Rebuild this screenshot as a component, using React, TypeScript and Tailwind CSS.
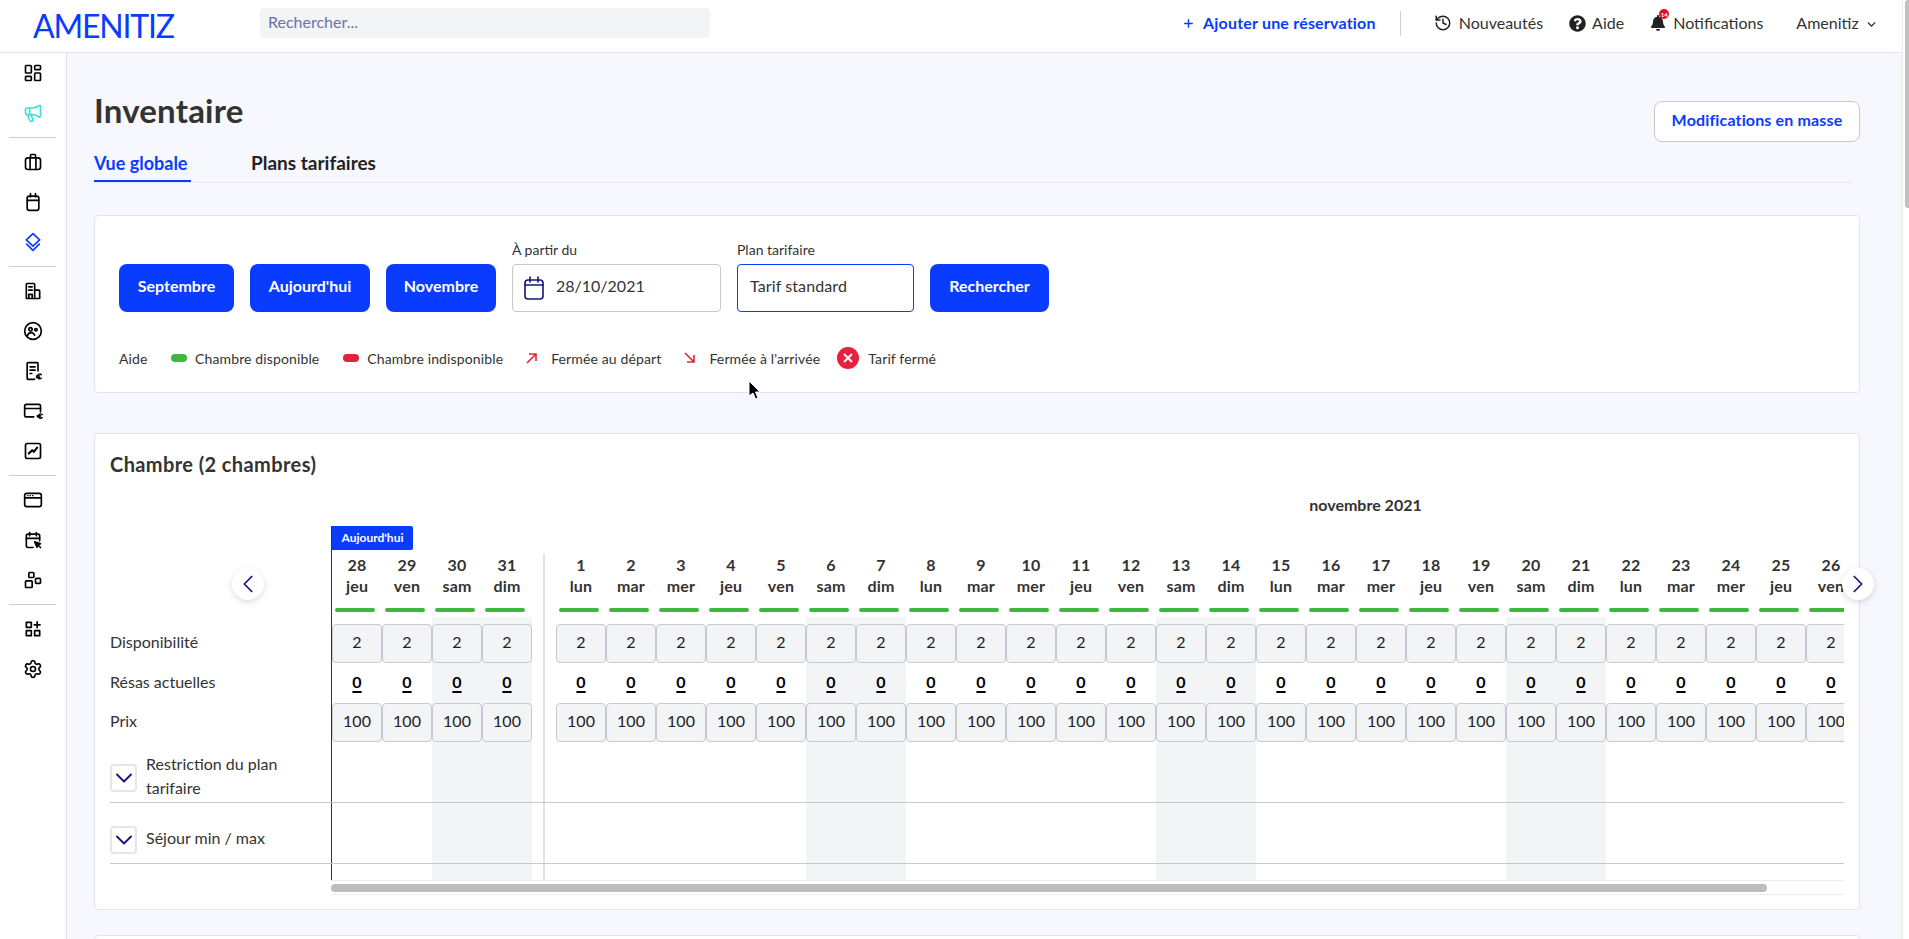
import { Fragment } from "react";
import {
  ChevronDown,
  ChevronLeft,
  ChevronRight,
  History,
  LayoutDashboard,
  Megaphone,
  Plus,
  Settings,
} from "lucide-react";
import { FaBell, FaQuestionCircle } from "react-icons/fa";

type Day = { num: number; name: string };

const OCTOBER: Day[] = [
  { num: 28, name: "jeu" },
  { num: 29, name: "ven" },
  { num: 30, name: "sam" },
  { num: 31, name: "dim" },
];

const WEEK = ["lun", "mar", "mer", "jeu", "ven", "sam", "dim"];
const NOVEMBER: Day[] = Array.from({ length: 26 }, (_, i) => ({ num: i + 1, name: WEEK[i % 7] }));

const isWeekend = (d: Day) => d.name === "sam" || d.name === "dim";

function Glyph({ children, className = "text-black" }: { children: React.ReactNode; className?: string }) {
  return (
    <svg
      width="20"
      height="20"
      viewBox="0 0 24 24"
      fill="none"
      stroke="currentColor"
      strokeWidth="2"
      strokeLinecap="round"
      strokeLinejoin="round"
      className={className}
    >
      {children}
    </svg>
  );
}

function Luggage() {
  return (
    <Glyph>
      <rect x="3" y="7" width="18" height="14" rx="3" />
      <path d="M9 7V4a1 1 0 0 1 1-1h4a1 1 0 0 1 1 1v3M8.500 7v14M15.500 7v14" />
    </Glyph>
  );
}

function CalendarBox() {
  return (
    <Glyph>
      <rect x="5" y="5" width="14" height="17" rx="2.500" />
      <path d="M5 10h14M9 2v4M15 2v4" />
    </Glyph>
  );
}

function StackedLayers() {
  return (
    <Glyph className="text-[#0a3cff]">
      <path d="M12 2l8 7.500-8 7.500-8-7.500z" />
      <path d="M4.500 14.500L12 22l7.500-7.500" />
    </Glyph>
  );
}

function Building() {
  return (
    <Glyph>
      <path d="M4 21V4a1 1 0 0 1 1-1h8a1 1 0 0 1 1 1v17z" />
      <path d="M14 11h5a1 1 0 0 1 1 1v9h-6" />
      <path d="M7 7h4M7 11h4M7 21v-5h4v5" />
    </Glyph>
  );
}

function Face() {
  return (
    <Glyph>
      <circle cx="12" cy="12" r="10" />
      <circle cx="9" cy="10" r="2" />
      <circle cx="15.500" cy="10.500" r="1.500" />
      <path d="M5 18c1-3 3-4 5-4s3 1 4 3" />
    </Glyph>
  );
}

function InvoiceEuro() {
  return (
    <Glyph>
      <path d="M14 22H6a1 1 0 0 1-1-1V3a1 1 0 0 1 1-1h11a1 1 0 0 1 1 1v9" />
      <path d="M8.500 7h6M8.500 11h6M8.500 15h2" />
      <path d="M22 16.500a2.500 2.500 0 0 0-4.500 1.500v1a2.500 2.500 0 0 0 4.500 1.500M16 18h4M16 20h4" strokeWidth="1.600" />
    </Glyph>
  );
}

function CardEuro() {
  return (
    <Glyph>
      <path d="M13 19H4a2 2 0 0 1-2-2V6a2 2 0 0 1 2-2h15a2 2 0 0 1 2 2v7" />
      <path d="M2 9h19" />
      <path d="M23 16.500a2.300 2.300 0 0 0-4.200 1.300v.7a2.300 2.300 0 0 0 4.200 1.300M17 17.500h4M17 19h4" strokeWidth="1.600" />
    </Glyph>
  );
}

function ChartBox() {
  return (
    <Glyph>
      <rect x="3" y="3" width="18" height="18" rx="2" />
      <path d="M7 15l4-4 2 2 4-5" strokeWidth="2.600" />
    </Glyph>
  );
}

function BrowserWindow() {
  return (
    <Glyph>
      <rect x="2" y="4" width="20" height="16" rx="2.500" />
      <path d="M2 9.500h20" />
      <path d="M5.500 6.800h.5M8.500 6.800h.5M11.500 6.800h.5" strokeWidth="1.600" />
    </Glyph>
  );
}

function CalendarPointer() {
  return (
    <Glyph>
      <path d="M12 21H6a2 2 0 0 1-2-2V7a2 2 0 0 1 2-2h12a2 2 0 0 1 2 2v6" />
      <path d="M4 10h16M8 3v4M16 3v4" />
      <path d="M14 14l7 2.500-3 1.200-1.200 3z" fill="currentColor" />
      <path d="M18 18l3 3" />
    </Glyph>
  );
}

function Blocks() {
  return (
    <Glyph>
      <rect x="7" y="3" width="6" height="6" rx="1" />
      <rect x="3" y="13" width="8" height="8" rx="1" />
      <rect x="15" y="10" width="6" height="6" rx="1" />
    </Glyph>
  );
}

function GridPlus() {
  return (
    <Glyph>
      <rect x="4" y="4" width="6" height="6" />
      <rect x="4" y="14" width="6" height="6" />
      <rect x="14" y="14" width="6" height="6" />
      <path d="M17 3.500v7M13.500 7h7" />
    </Glyph>
  );
}

function SideIcon({ children }: { children: React.ReactNode }) {
  return <div className="flex h-[40px] items-center justify-center">{children}</div>;
}

function SideDivider() {
  return <div className="mx-[9px] my-[4px] h-[1px] bg-[#cfcfcf]" />;
}

function Sidebar() {
  return (
    <aside className="w-[67px] shrink-0 border-r border-[#dfe3f8] bg-white pr-[1px]">
      <SideIcon>
        <LayoutDashboard size={20} strokeWidth={2} className="text-black" />
      </SideIcon>
      <SideIcon>
        <Megaphone size={20} strokeWidth={2} className="text-[#3fe0d8]" />
      </SideIcon>
      <SideDivider />
      <SideIcon>
        <Luggage />
      </SideIcon>
      <SideIcon>
        <CalendarBox />
      </SideIcon>
      <SideIcon>
        <StackedLayers />
      </SideIcon>
      <SideDivider />
      <SideIcon>
        <Building />
      </SideIcon>
      <SideIcon>
        <Face />
      </SideIcon>
      <SideIcon>
        <InvoiceEuro />
      </SideIcon>
      <SideIcon>
        <CardEuro />
      </SideIcon>
      <SideIcon>
        <ChartBox />
      </SideIcon>
      <SideDivider />
      <SideIcon>
        <BrowserWindow />
      </SideIcon>
      <SideIcon>
        <CalendarPointer />
      </SideIcon>
      <SideIcon>
        <Blocks />
      </SideIcon>
      <SideDivider />
      <SideIcon>
        <GridPlus />
      </SideIcon>
      <SideIcon>
        <Settings size={20} strokeWidth={2} className="text-black" />
      </SideIcon>
    </aside>
  );
}

function Header() {
  return (
    <header className="flex h-[53px] shrink-0 items-center border-b border-[#dfe3f8] bg-white pb-[6px]">
      <div className="ml-[33px] mt-[5px] w-[227px] text-[32px] font-normal leading-none tracking-[-1.2px] text-[#0a3cff]">AMENITIZ</div>
      <div className="flex h-[30px] w-[450px] items-center rounded-[4px] bg-[#f3f4f6] pb-[2px] pl-[8px] text-[16px] text-[#6f6fae]">
        Rechercher...
      </div>
      <div className="ml-[472px] flex items-center text-[#0a3cff]">
        <Plus size={13} strokeWidth={2.5} />
        <span className="ml-[8px] text-[16px] font-bold tracking-[0.2px]">Ajouter une réservation</span>
      </div>
      <div className="ml-[24px] h-[25px] w-[1px] bg-[#cfcfcf]" />
      <div className="ml-[33px] flex items-center text-[16px] text-[#333]">
        <History size={18} strokeWidth={2} className="text-[#222]" />
        <span className="ml-[7px]">Nouveautés</span>
        <FaQuestionCircle size={17} className="ml-[26px] text-[#222]" />
        <span className="ml-[6px]">Aide</span>
        <div className="relative ml-[26px] flex">
          <FaBell size={16} className="text-[#222]" />
          <span className="absolute left-[9px] top-[-6px] flex h-[10px] w-[10px] items-center justify-center rounded-full bg-[#e01020] text-[6px] font-bold text-white">
            14
          </span>
        </div>
        <span className="ml-[7px]">Notifications</span>
        <span className="ml-[33px]">Amenitiz</span>
        <ChevronDown size={13} strokeWidth={2.5} className="ml-[6px] mt-[2px] text-[#222]" />
      </div>
    </header>
  );
}

function Pill({ color, label }: { color: string; label: string }) {
  return (
    <div className="flex items-center gap-[8px]">
      <span className={`h-[8px] w-[16px] rounded-full ${color}`} />
      <span>{label}</span>
    </div>
  );
}

function Arrow({ down }: { down?: boolean }) {
  return (
    <svg width="14" height="14" viewBox="0 0 14 14" fill="none" stroke="#e8203f" strokeWidth="1.6">
      {down ? <path d="M2 2l9 9M11 4v7H4" /> : <path d="M2 12l9-9M4 3h7v7" />}
    </svg>
  );
}

function Filters() {
  const btn = "flex h-[48px] items-center justify-center rounded-[8px] bg-[#0a3cff] pb-[4px] text-[16px] font-bold text-white";
  return (
    <section className="h-[178px] rounded-[4px] border border-[#dfe3f5] bg-white pl-[24px] pt-[26px]">
      <div className="flex items-end gap-[16px]">
        <div className={`${btn} w-[115px]`}>Septembre</div>
        <div className={`${btn} w-[120px]`}>Aujourd'hui</div>
        <div className={`${btn} w-[110px]`}>Novembre</div>
        <div>
          <div className="mb-[6px] text-[14px] leading-[16px] text-[#333]">À partir du</div>
          <div className="flex h-[48px] w-[209px] items-center rounded-[4px] border border-[#c8c8c8] pl-[11px] text-[16px] text-[#333]">
            <svg width="20" height="24" viewBox="0 0 20 24" fill="none" stroke="#14147a" strokeWidth="1.6" strokeLinecap="round">
              <rect x="1" y="4" width="18" height="19" rx="3" />
              <path d="M1 9h18M6 1v5M14 1v5" />
            </svg>
            <span className="mb-[4px] ml-[12px]">28/10/2021</span>
          </div>
        </div>
        <div>
          <div className="mb-[6px] text-[14px] leading-[16px] text-[#333]">Plan tarifaire</div>
          <div className="flex h-[48px] w-[177px] items-center rounded-[4px] border border-[#0a3cff] pb-[4px] pl-[12px] text-[16px] tracking-[0.1px] text-[#333]">
            Tarif standard
          </div>
        </div>
        <div className={`${btn} w-[119px]`}>Rechercher</div>
      </div>
      <div className="mt-[35px] flex h-[22px] items-center text-[14px] tracking-[0.13px] text-[#333]">
        <span className="w-[52px]">Aide</span>
        <Pill color="bg-[#3cb93c]" label="Chambre disponible" />
        <div className="ml-[24px]">
          <Pill color="bg-[#e8203f]" label="Chambre indisponible" />
        </div>
        <div className="ml-[22px] flex items-center gap-[12px]">
          <Arrow />
          <span>Fermée au départ</span>
        </div>
        <div className="ml-[22px] flex items-center gap-[12px]">
          <Arrow down />
          <span>Fermée à l'arrivée</span>
        </div>
        <div className="ml-[17px] flex items-center gap-[9px]">
          <span className="flex h-[22px] w-[22px] items-center justify-center rounded-full bg-[#e8203f]">
            <svg width="10" height="10" viewBox="0 0 10 10" stroke="white" strokeWidth="2">
              <path d="M1 1l8 8M9 1l-8 8" />
            </svg>
          </span>
          <span>Tarif fermé</span>
        </div>
      </div>
    </section>
  );
}

// one row of the calendar: the label on the left, then a cell per day with the month gap in between
function Row({
  label,
  className,
  render,
  line = true,
  shade = true,
}: {
  label?: React.ReactNode;
  className: string;
  render: (d: Day) => React.ReactNode;
  line?: boolean;
  shade?: boolean;
}) {
  const cell = (d: Day) => (
    <div key={d.num} className={`flex w-[50px] shrink-0 justify-center ${shade && isWeekend(d) ? "bg-[#f3f4f6]" : ""}`}>
      {render(d)}
    </div>
  );
  return (
    <div className={`flex ${className}`}>
      <div className="flex w-[221px] shrink-0 items-center">{label}</div>
      <div className="flex min-w-0 flex-1 overflow-hidden border-l border-[#0a20ff]">
        {OCTOBER.map(cell)}
        <div className="flex w-[24px] shrink-0 justify-center">
          {line && <div className="h-full w-[2px] bg-[#e2e2e6]" />}
        </div>
        {NOVEMBER.map(cell)}
      </div>
    </div>
  );
}

function BoxCell({ value }: { value: number }) {
  return (
    <div className="flex h-[39px] w-[50px] items-center justify-center rounded-[4px] border border-[#c8c8d0] bg-[#f3f4f6] pb-[3px] text-[16px] text-[#222]">
      {value}
    </div>
  );
}

function Expander({ label }: { label: React.ReactNode }) {
  return (
    <div className="flex items-center gap-[9px]">
      <div className="flex h-[28px] w-[27px] shrink-0 items-center justify-center rounded-[4px] border-2 border-[#e6e6ea]">
        <ChevronDown size={28} strokeWidth={1.6} className="shrink-0 text-[#14147a]" />
      </div>
      <div className="pb-[5px] text-[16px] leading-[24px] text-[#333]">{label}</div>
    </div>
  );
}

function RoomCard() {
  const rowLabel = "pb-[3px] text-[16px] text-[#333]";
  return (
    <section className="relative mt-[40px] h-[477px] rounded-[4px] border border-[#dfe3f5] bg-white pl-[15px] pr-[15px]">
      <h2 className="pt-[20px] text-[20px] font-bold leading-[21px] tracking-[0.4px] text-[#333]">Chambre (2 chambres)</h2>
      <div className="pl-[777px] pt-[20px] text-center text-[16px] font-bold leading-[20px] text-[#333]">novembre 2021</div>

      <div className="mt-[11px] flex h-[28px]">
        <div className="w-[221px] shrink-0" />
        <div className="h-full flex-1 border-l border-[#0a20ff]">
          <div className="flex h-[24px] w-[81px] items-center justify-center rounded-r-[2px] bg-[#0a3cff] text-[12px] font-bold text-white">
            Aujourd'hui
          </div>
        </div>
      </div>

      <Row
        className="h-[52px]"
        shade={false}
        render={(d) => (
          <div className="text-center text-[16px] font-bold leading-[21px] tracking-[0.2px] text-[#333]">
            <div>{d.num}</div>
            <div>{d.name}</div>
          </div>
        )}
      />
      <Row
        className="h-[11px]"
        shade={false}
        render={() => <div className="mr-[4px] mt-[2px] h-[4px] w-[40px] rounded-full bg-[#3cb93c]" />}
      />
      <Row
        className="h-[46px]"
        label={<span className={`${rowLabel} mt-[6px]`}>Disponibilité</span>}
        render={() => (
          <div className="pt-[7px]">
            <BoxCell value={2} />
          </div>
        )}
      />
      <Row
        className="h-[40px]"
        label={<span className={rowLabel}>Résas actuelles</span>}
        render={() => (
          <div className="flex h-full items-center pb-[3px] text-[16px] font-bold text-black underline decoration-2 underline-offset-[3px]">0</div>
        )}
      />
      <Row className="h-[39px]" label={<span className={rowLabel}>Prix</span>} render={() => <BoxCell value={100} />} />
      <div className="border-b border-[#c8c8c8]">
        <Row
          className="h-[60px]"
          label={
            <div className="pt-[12px]">
              <Expander
                label={
                  <Fragment>
                    Restriction du plan
                    <br />
                    tarifaire
                  </Fragment>
                }
              />
            </div>
          }
          render={() => <div className="h-full" />}
        />
      </div>
      <div className="border-b border-[#c8c8c8]">
        <Row
          className="h-[60px]"
          label={
            <div className="pt-[14px]">
              <Expander label="Séjour min / max" />
            </div>
          }
          render={() => <div className="h-full" />}
        />
      </div>
      <Row className="h-[16px]" render={() => <div className="h-full" />} />

      <div className="flex h-[15px]">
        <div className="w-[221px] shrink-0" />
        <div className="flex flex-1 items-center border-y border-[#ececec]">
          <div className="h-[8px] w-[1436px] rounded-full bg-[#bdbdbd]" />
        </div>
      </div>

      <button
        type="button"
        className="absolute left-[137px] top-[134px] flex h-[32px] w-[32px] items-center justify-center rounded-full bg-white shadow-[0_2px_6px_rgba(0,0,0,0.15)]"
      >
        <ChevronLeft size={30} strokeWidth={1.4} className="text-[#14147a]" />
      </button>
      <button
        type="button"
        className="absolute left-[1747px] top-[134px] flex h-[32px] w-[32px] items-center justify-center rounded-full bg-white shadow-[0_2px_6px_rgba(0,0,0,0.15)]"
      >
        <ChevronRight size={30} strokeWidth={1.4} className="text-[#14147a]" />
      </button>
    </section>
  );
}

export default function App() {
  return (
    <div className="relative flex h-[939px] overflow-hidden bg-white font-['Lato',sans-serif]">
      <div className="flex min-w-0 flex-1 flex-col">
        <Header />
        <div className="flex min-h-0 flex-1">
          <Sidebar />
          <main className="min-w-0 flex-1 overflow-hidden bg-[#f7f8fd] pl-[27px] pr-[42px]">
            <div className="relative h-[162px]">
              <h1 className="pt-[37px] text-[33px] font-bold leading-[40px] tracking-[0.2px] text-[#333]">Inventaire</h1>
              <div className="absolute right-0 top-[48px] flex h-[41px] w-[206px] items-center justify-center rounded-[8px] border border-[#c8c8c8] bg-white pb-[3px] text-[16px] font-bold tracking-[0.15px] text-[#0a3cff]">
                Modifications en masse
              </div>
              <div className="mr-[8px] mt-[18px] flex h-[35px] gap-[60px] whitespace-nowrap border-b border-[#e8eaf2] pt-[3px] text-[18px] font-bold leading-[24px]">
                <div className="w-[97px] border-b-2 border-[#0a3cff] text-[#0a3cff]">Vue globale</div>
                <div className="text-[19px] text-[#222]">Plans tarifaires</div>
              </div>
            </div>
            <Filters />
            <RoomCard />
            <div className="mt-[25px] h-[40px] rounded-[4px] border border-[#dfe3f5] bg-white" />
          </main>
        </div>
      </div>
      <div className="w-[7px] shrink-0 border-l border-[#ececec] bg-white pl-[2px]">
        <div className="h-[208px] w-full rounded-l-[3px] bg-[#c1c1c1]" />
      </div>
      <svg width="14" height="20" viewBox="0 0 14 20" className="absolute left-[748px] top-[380px]">
        <path d="M1 1v15l4-3 2.500 6 2.500-1-2.500-6H12z" fill="black" stroke="white" strokeWidth="1" />
      </svg>
    </div>
  );
}
